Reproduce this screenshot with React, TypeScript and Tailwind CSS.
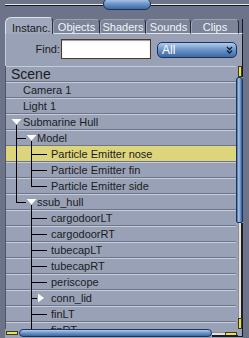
import { FC, ReactNode } from "react";

type Seg = [number, number, number, number];

interface TreeRow {
  label: string;
  textX: number;
  segs?: Seg[];
  down?: number;
  right?: boolean;
  selected?: boolean;
}

const O = 10.5;
const I = 25.5;
const full = (x: number): Seg => [x, 0, x, 16];
const leaf: Seg[] = [full(I), [I, 8.5, 41, 8.5]];

const rows: TreeRow[] = [
  { label: "Camera 1", textX: 17 },
  { label: "Light 1", textX: 17 },
  { label: "Submarine Hull", textX: 17, down: O, segs: [[O, 11, O, 16]] },
  { label: "Model", textX: 31, down: I, segs: [full(O), [O, 8.5, 20, 8.5], [I, 11, I, 16]] },
  { label: "Particle Emitter nose", textX: 45, selected: true, segs: [full(O), ...leaf] },
  { label: "Particle Emitter fin", textX: 45, segs: [full(O), ...leaf] },
  { label: "Particle Emitter side", textX: 45, segs: [full(O), [I, 0, I, 8.5], [I, 8.5, 41, 8.5]] },
  { label: "ssub_hull", textX: 31, down: I, segs: [[O, 0, O, 8.5], [O, 8.5, 20, 8.5], [I, 11, I, 16]] },
  { label: "cargodoorLT", textX: 45, segs: leaf },
  { label: "cargodoorRT", textX: 45, segs: leaf },
  { label: "tubecapLT", textX: 45, segs: leaf },
  { label: "tubecapRT", textX: 45, segs: leaf },
  { label: "periscope", textX: 45, segs: leaf },
  { label: "conn_lid", textX: 45, right: true, segs: [full(I), [I, 8.5, 31, 8.5]] },
  { label: "finLT", textX: 45, segs: leaf },
  { label: "finRT", textX: 45, segs: leaf },
];

const tabs = [
  { label: "Objects", w: "w-[47px]" },
  { label: "Shaders", w: "w-[46px]" },
  { label: "Sounds", w: "w-[45px]" },
  { label: "Clips", w: "w-[48px]" },
];

const Yellow: FC<{ className: string }> = ({ className }) => (
  <div className={`border border-[#3c3a12] bg-[#e8df5c] ${className}`} />
);

const Tree: FC<{ row: TreeRow }> = ({ row }) => (
  <svg width={row.textX} height={16} className="shrink-0" shapeRendering="crispEdges">
    {row.segs?.map(([x1, y1, x2, y2], i) => (
      <line key={i} x1={x1} y1={y1} x2={x2} y2={y2} stroke="#000" strokeWidth={1} />
    ))}
    {row.down !== undefined && (
      <polygon
        points={`${row.down - 5},5 ${row.down + 5},5 ${row.down},10.5`}
        fill="#fff"
        shapeRendering="auto"
      />
    )}
    {row.right && <polygon points="32,3.5 32,12.5 38,8" fill="#fff" shapeRendering="auto" />}
  </svg>
);

const Row: FC<{ row: TreeRow; children?: ReactNode }> = ({ row }) => (
  <div
    className={
      row.selected
        ? "flex h-[16px] shrink-0 items-center bg-[#dcd57b] shadow-[inset_0_-1px_0_#6e7588]"
        : "flex h-[16px] shrink-0 items-center shadow-[inset_0_1px_0_#c5cbd7,inset_0_-1px_0_#6e7588]"
    }
  >
    <Tree row={row} />
    <span className="whitespace-nowrap text-[11px] leading-[16px] text-[#1c1c1e]">{row.label}</span>
  </div>
);

const App: FC = () => {
  return (
    <div className="flex h-[338px] w-[249px] flex-col overflow-hidden bg-[#6d7489] font-['Liberation_Sans',Arial,sans-serif]">
      {/* top drag bar */}
      <div className="flex h-[17px] shrink-0 items-start pl-[5px]">
        <div className="mt-[4px] h-[2px] w-[98px] border-t border-b border-t-[#e6e9ef] border-b-[#15171d]" />
        <div className="-mt-[2px] h-[12px] w-[48px] rounded-full border border-[#1c3360] bg-[linear-gradient(#b6cdea,#7199cb_45%,#3e69a2)]" />
        <div className="mt-[4px] h-[2px] flex-1 border-t border-b border-t-[#e6e9ef] border-b-[#15171d]" />
      </div>

      {/* tabs */}
      <div className="flex h-[17px] shrink-0 items-end pl-[5px]">
        <div className="h-[17px] w-[48px] rounded-tl-[6px] rounded-tr-[4px] border-t border-l border-r border-t-[#dde1ea] border-l-[#dde1ea] border-r-[#2e323d] bg-[#a0a8bb] pt-[4px] pl-[6px] text-[11px] leading-[12px] text-[#1c1c1e]">
          Instanc.
        </div>
        {tabs.map((t) => (
          <div
            key={t.label}
            className={`${t.w} h-[15px] rounded-tl-[5px] rounded-tr-[4px] border-t border-l border-r border-b border-t-[#9aa2b4] border-l-[#9ea6b8] border-r-[#262a34] border-b-[#dfe3ea] bg-[#7c8499] pt-[2px] text-center text-[11px] leading-[11px] text-[#f2f4f8]`}
          >
            {t.label}
          </div>
        ))}
        <div className="h-[15px] w-[4px] border-b border-r border-b-[#dfe3ea] border-r-[#15171d]" />
      </div>

      {/* panel */}
      <div className="ml-[5px] flex min-h-0 w-[238px] flex-1 flex-col bg-[#98a1b5]">
        <div className="flex h-[32px] shrink-0 items-start border-l border-r border-l-[#c3c9d5] border-r-[#15171d]">
          <div className="mt-[7px] w-[54px] text-right text-[11px] leading-[16px] text-[#1c1c1e]">Find:</div>
          <div className="mt-[5px] ml-[1px] h-[20px] w-[90px] border border-[#4a3b22] bg-white shadow-[inset_0_1px_1px_#9a9a9a]" />
          <div className="mt-[8px] ml-[6px] flex h-[16px] w-[80px] items-center justify-between rounded-[5px] border border-[#1c3360] bg-[linear-gradient(#b3cbe9,#6f98cb_45%,#3d68a1)] pr-[3px] pl-[4px]">
            <span className="text-[12px] leading-[14px] text-white">All</span>
            <svg width={7} height={8} viewBox="0 0 7 8">
              <polyline points="1,1 3.5,3.5 6,1" fill="none" stroke="#0f1c36" strokeWidth={1.3} />
              <polyline points="1,4.5 3.5,7 6,4.5" fill="none" stroke="#0f1c36" strokeWidth={1.3} />
            </svg>
          </div>
        </div>

        <div className="flex min-h-0 flex-1">
          <div className="flex min-w-0 flex-1 flex-col overflow-hidden border-l border-l-[#4f566a]">
            <div className="flex h-[16px] shrink-0 items-center pl-[5px] text-[14px] leading-[16px] text-[#1c1c1e] shadow-[inset_0_1px_0_#c5cbd7,inset_0_-1px_0_#6e7588]">
              Scene
            </div>
            {rows.map((r) => (
              <Row key={r.label} row={r} />
            ))}
          </div>

          {/* vertical scrollbar */}
          <div className="flex w-[7px] shrink-0 flex-col">
            <div className="flex h-[11px] shrink-0">
              <div className="w-[2px]" />
              <Yellow className="h-[11px] w-[4px]" />
              <div className="w-[1px] bg-[#15171d]" />
            </div>
            <div className="h-[146px] shrink-0 rounded-t-[3px] rounded-b-[2px] border border-[#1c3360] bg-[linear-gradient(90deg,#3c66a0,#abc5e7_35%,#638dc3_70%,#2f5589)]" />
            <div className="flex flex-1">
              <div className="w-[2px]" />
              <div className="w-[3px] border-l border-l-[#8d8d8d] bg-[#e2e2e2]" />
              <div className="w-[2px] bg-[#1d1d1f]" />
            </div>
            <div className="flex h-[11px] shrink-0">
              <div className="w-[2px]" />
              <Yellow className="h-[11px] w-[4px]" />
              <div className="w-[1px] bg-[#15171d]" />
            </div>
          </div>
        </div>

        {/* horizontal scrollbar */}
        <div className="flex h-[9px] shrink-0 items-start">
          <div className="flex h-[8px] w-[14px] items-center pl-[1px]">
            <Yellow className="h-[4px] w-[12px]" />
          </div>
          <div className="h-[8px] w-[193px] rounded-[4px] border border-[#1c3360] bg-[linear-gradient(#b3cbe9,#6f98cb_45%,#3d68a1)]" />
          <div className="flex h-[8px] w-[26px] flex-col">
            <div className="h-[3px]" />
            <div className="flex h-[3px]">
              <div className="flex-1 border-t border-t-[#8d8d8d] bg-[#e2e2e2]" />
              <Yellow className="h-[4px] w-[12px]" />
              <div className="w-[1px]" />
            </div>
            <div className="h-[2px] bg-[#1d1d1f]" />
          </div>
          <div className="h-[8px] w-[5px] border-r border-b border-[#15171d]" />
        </div>
      </div>
    </div>
  );
};

export default App;
